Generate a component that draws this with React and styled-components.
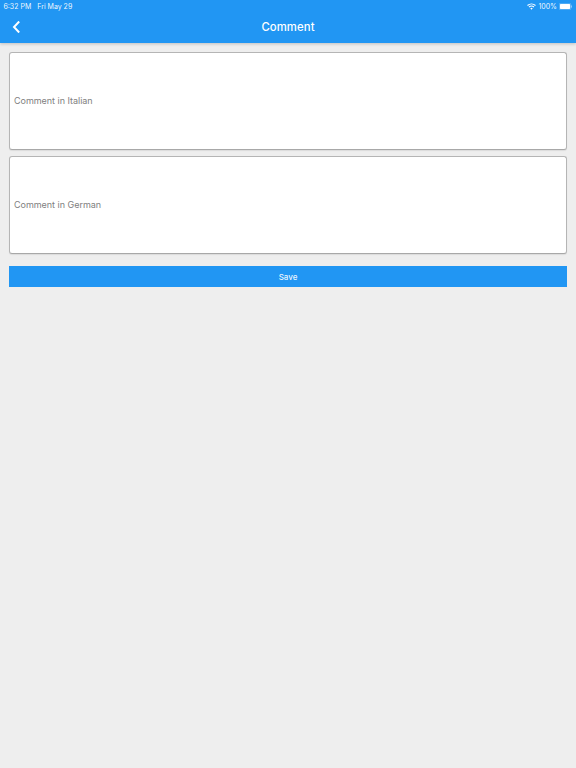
import React from "react";
import styled, { createGlobalStyle } from "styled-components";

const Global = createGlobalStyle`
  html, body { margin: 0; padding: 0; background: #eeeeee; }
  * { box-sizing: border-box; }
`;
const Page = styled.div`
  width: 576px; height: 768px; background: #eeeeee; overflow: hidden;
  font-family: Inter, Roboto, "Liberation Sans", sans-serif;
`;
const Header = styled.header`
  height: 43px; background: #2196f3; color: #fff;
  box-shadow: 0 1px 3px rgba(0,0,0,.2);
  display: flex; flex-direction: column;
`;
const StatusBar = styled.div`
  height: 12px; padding: 0 4px 0 3.5px; display: flex; align-items: center;
  justify-content: space-between; font-size: 7px; font-weight: 400; color: rgba(255,255,255,.95);
`;
const StatusGroup = styled.div`
  display: flex; align-items: center; gap: ${p => p.$gap}px;
`;
const NavBar = styled.div`
  flex: 1; display: flex; align-items: center; justify-content: center; position: relative; padding-bottom: 1px;
`;
const Back = styled.button`
  position: absolute; left: 11px; top: 6px; width: 10px; height: 18px; padding: 0; border: 0;
  background: none; display: flex; align-items: center; justify-content: center;
`;
const Title = styled.h1`
  margin: 0; font-size: 11.3px; font-weight: 500; letter-spacing: .1px; position: relative; top: 0;
`;
const Content = styled.main`
  padding: 9px 9px 0; display: flex; flex-direction: column;
`;
const Field = styled.div`
  height: 98px; margin-bottom: ${p => p.$mb}px; background: #fff; border: 1px solid #b5b5b5;
  border-bottom-color: #a8a8a8; border-radius: 3px; display: flex; align-items: center; padding: 0 4px 1px;
  box-shadow: 0 1px 1px rgba(0,0,0,.08);
  font-size: 9px; letter-spacing: -.03px; color: #808080;
`;
const SaveButton = styled.button`
  height: 21px; border: 0; background: #2196f3; color: rgba(255,255,255,.92); font-family: inherit;
  font-size: 8px; font-weight: 500; padding: 0;
`;

export default function App() {
  return (
    <Page>
      <Global />
      <Header>
        <StatusBar>
          <StatusGroup $gap={6}><span>6:32 PM</span><span>Fri May 29</span></StatusGroup>
          <StatusGroup $gap={2}>
            <svg width="9" height="7" viewBox="0 0 18 14" fill="none" stroke="#fff" strokeWidth="2.2">
              <path d="M1 5a12 12 0 0 1 16 0M4 8a8 8 0 0 1 10 0" />
              <path d="M6.5 10.5a4 4 0 0 1 5 0L9 13.5z" fill="#fff" stroke="none" />
            </svg>
            <span>100%</span>
            <svg width="13" height="7" viewBox="0 0 14 7" preserveAspectRatio="none">
              <rect x=".25" y=".25" width="12.5" height="6.5" rx="1.5" fill="none" stroke="rgba(255,255,255,.55)" strokeWidth=".5" />
              <rect x="1" y="1" width="11" height="5" rx=".8" fill="#fff" />
              <rect x="13.1" y="2.3" width=".8" height="2.4" rx=".4" fill="rgba(255,255,255,.6)" />
            </svg>
          </StatusGroup>
        </StatusBar>
        <NavBar>
          <Back aria-label="Back">
            <svg width="8" height="12" viewBox="0 0 8 12" fill="none" stroke="#fff" strokeWidth="2" strokeLinecap="square">
              <path d="M6.5 1.2L2 6l4.5 4.8" />
            </svg>
          </Back>
          <Title>Comment</Title>
        </NavBar>
      </Header>
      <Content>
        <Field $mb={6}>Comment in Italian</Field>
        <Field $mb={12}>Comment in German</Field>
        <SaveButton>Save</SaveButton>
      </Content>
    </Page>
  );
}
